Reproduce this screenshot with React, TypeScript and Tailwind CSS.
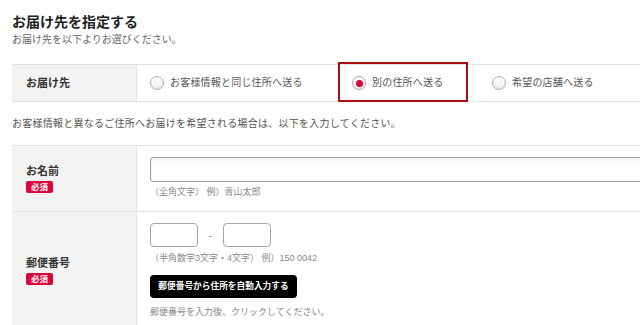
import React from 'react';

function Radio({ checked }: { checked?: boolean }) {
  return (
    <span className="flex h-[14px] w-[14px] shrink-0 items-center justify-center rounded-full border border-[#a9a9a9] bg-gradient-to-b from-white to-[#ececec]">
      {checked && <span className="h-[7px] w-[7px] rounded-full bg-[#d8003a]"></span>}
    </span>
  );
}

function Required() {
  return (
    <span className="mt-[3px] flex h-[12px] w-[27px] items-center justify-center rounded-[2px] bg-[#d7063b] text-[8.5px] font-bold leading-none text-white">
      必須
    </span>
  );
}

export default function App() {
  return (
    <div className="h-[325px] w-[640px] overflow-hidden bg-white font-['Liberation_Sans','Noto_Sans_CJK_JP',sans-serif] text-[#333]">
      <div className="pl-3 pt-[14px]">
        {/* Heading */}
        <h2 className="text-[14px] font-bold leading-[16px] text-[#222]">お届け先を指定する</h2>
        <p className="mt-[4px] text-[10px] leading-[12px] text-[#666]">お届け先を以下よりお選びください。</p>

        {/* Destination choice */}
        <div className="relative mt-[18px] flex h-[38px] border-y border-[#e2e2e2]">
          <div className="flex w-[125px] shrink-0 items-center border-r border-[#e2e2e2] bg-[#f3f3f3] pl-[14px] text-[11px] font-bold leading-[14px]">
            お届け先
          </div>
          <div className="flex flex-1 items-center pl-[13px] text-[10px] leading-[12px] tracking-[0.2px] text-[#555]">
            <label className="flex w-[202px] items-center gap-[6px]">
              <Radio />
              お客様情報と同じ住所へ送る
            </label>
            <label className="flex w-[140px] items-center gap-[6px]">
              <Radio checked />
              別の住所へ送る
            </label>
            <label className="flex items-center gap-[6px]">
              <Radio />
              希望の店舗へ送る
            </label>
          </div>
          <div className="absolute left-[326px] top-[-3px] h-[40px] w-[130px] border-2 border-[#a80d12]"></div>
        </div>

        <p className="mt-[16px] text-[10px] leading-[12px] tracking-[0.25px] text-[#555]">
          お客様情報と異なるご住所へお届けを希望される場合は、以下を入力してください。
        </p>

        {/* Name */}
        <div className="mt-[15px] flex border-t border-[#e2e2e2]">
          <div className="flex w-[125px] shrink-0 flex-col justify-center border-r border-[#e2e2e2] bg-[#f3f3f3] pl-[14px]">
            <span className="text-[11px] font-bold leading-[14px]">お名前</span>
            <Required />
          </div>
          <div className="flex-1 pb-[13px] pl-[13px] pt-[11px]">
            <div className="h-[25px] w-[560px] rounded-[3px] border border-[#9a9a9a] bg-white shadow-[inset_0_2px_3px_rgba(70,90,170,0.08)]"></div>
            <p className="mt-[5px] text-[9px] leading-[11px] text-[#888]">（全角文字） 例）青山太郎</p>
          </div>
        </div>

        {/* Postal code */}
        <div className="flex border-t border-[#e2e2e2]">
          <div className="flex w-[125px] shrink-0 flex-col justify-center border-r border-[#e2e2e2] bg-[#f3f3f3] pl-[14px]">
            <span className="text-[11px] font-bold leading-[14px]">郵便番号</span>
            <Required />
          </div>
          <div className="flex-1 pb-[11px] pl-[13px] pt-[11px]">
            <div className="flex items-center">
              <div className="h-[24px] w-[48px] rounded-[4px] border border-[#a5a5a5] bg-white"></div>
              <span className="w-[25px] text-center text-[10px] text-[#888]">-</span>
              <div className="h-[24px] w-[48px] rounded-[4px] border border-[#a5a5a5] bg-white"></div>
            </div>
            <p className="mt-[6px] text-[9px] leading-[11px] text-[#888]">（半角数字3文字・4文字） 例）150 0042</p>
            <button className="mt-[11px] flex h-[23px] w-[147px] items-center justify-center rounded-[4px] bg-black text-[8.7px] font-bold leading-none text-white">
              郵便番号から住所を自動入力する
            </button>
            <p className="mt-[9px] text-[9px] leading-[11px] text-[#888]">郵便番号を入力後、クリックしてください。</p>
          </div>
        </div>
      </div>
    </div>
  );
}
